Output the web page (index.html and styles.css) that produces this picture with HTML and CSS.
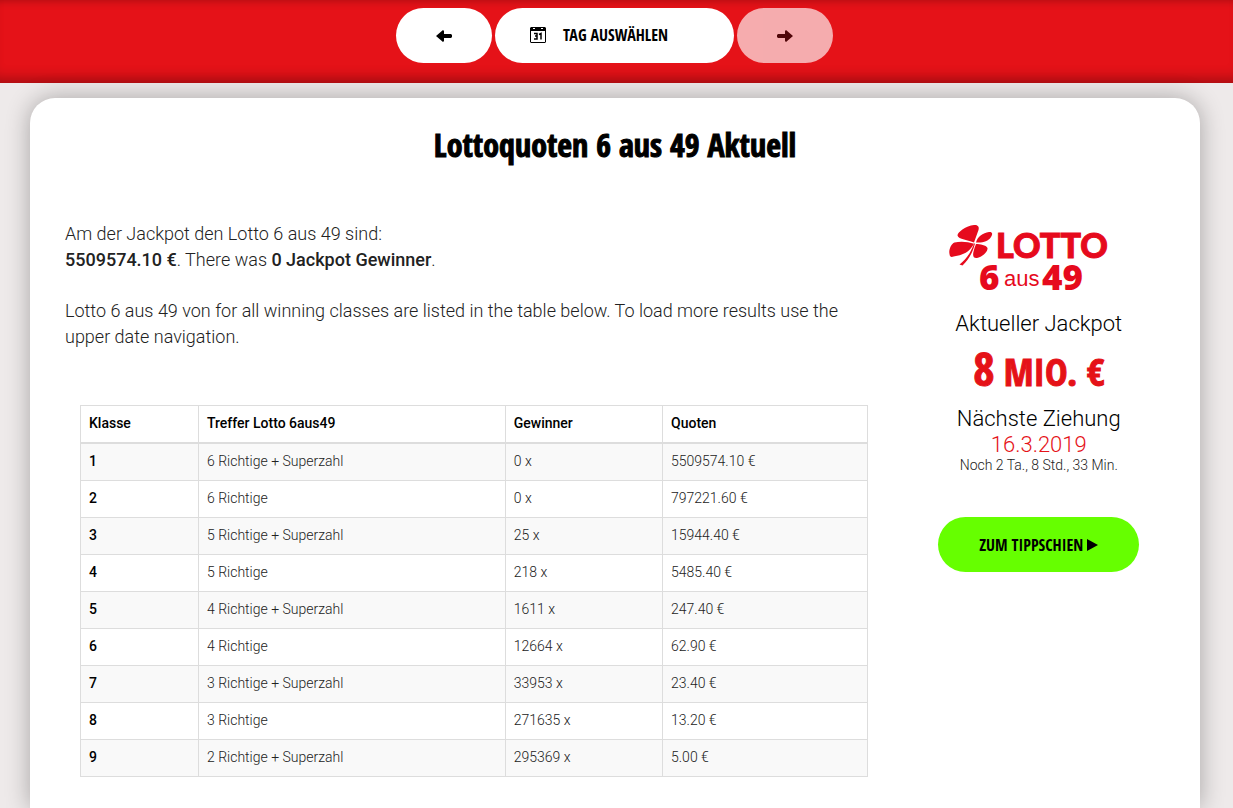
FILE: index.html
```html
<!DOCTYPE html>
<html lang="de">
<head>
	<meta charset="utf-8">
	<title>Lottoquoten 6 aus 49 Aktuell</title>
	<link rel="stylesheet" href="styles.css">
</head>
<body>
	<nav class="date-nav">
		<button class="btn btn-arrow" type="button" aria-label="Vorheriger Tag">
			<svg width="16" height="12" viewBox="0 0 16 12"><path d="M0 6 7 0 8 1V4H15L16 5V7L15 8H8V11L7 12Z"/></svg>
		</button>
		<button class="btn btn-date" type="button">
			<svg width="16" height="16" viewBox="0 0 16 16">
				<path fill-rule="evenodd" d="M1 0H15L16 1V15L15 16H1L0 15V1ZM1 4V15H15V4Z"/>
				<path fill="#fff" d="M3 1h2v1H3zM11 1h2v1h-2z"/>
				<path fill="none" stroke="#000" stroke-width="1.5" d="M4 6.500H7V12H4M5 9H7M9 7.500 11 6.500V12.500"/>
			</svg>
			<span>TAG AUSWÄHLEN</span>
		</button>
		<button class="btn btn-arrow" type="button" aria-label="Nächster Tag" disabled>
			<svg width="16" height="12" viewBox="0 0 16 12"><path d="M16 6 9 0 8 1V4H1L0 5V7L1 8H8V11L9 12Z"/></svg>
		</button>
	</nav>

	<main class="card">
		<h1>Lottoquoten 6 aus 49 Aktuell</h1>
		<div class="row">
			<section class="results">
				<p>Am der Jackpot den Lotto 6 aus 49 sind:<br>
				<b>5509574.10 €</b>. There was <b>0 Jackpot Gewinner</b>.</p>
				<p>Lotto 6 aus 49 von for all winning classes are listed in the table below. To load more results use the upper date navigation.</p>

				<div class="table-wrap">
					<table>
						<colgroup><col class="c-class"><col class="c-hits"><col class="c-winners"><col class="c-odds"></colgroup>
						<thead>
							<tr><th>Klasse</th><th>Treffer Lotto 6aus49</th><th>Gewinner</th><th>Quoten</th></tr>
						</thead>
						<tbody>
							<tr><th>1</th><td>6 Richtige + Superzahl</td><td>0 x</td><td>5509574.10 €</td></tr>
							<tr><th>2</th><td>6 Richtige</td><td>0 x</td><td>797221.60 €</td></tr>
							<tr><th>3</th><td>5 Richtige + Superzahl</td><td>25 x</td><td>15944.40 €</td></tr>
							<tr><th>4</th><td>5 Richtige</td><td>218 x</td><td>5485.40 €</td></tr>
							<tr><th>5</th><td>4 Richtige + Superzahl</td><td>1611 x</td><td>247.40 €</td></tr>
							<tr><th>6</th><td>4 Richtige</td><td>12664 x</td><td>62.90 €</td></tr>
							<tr><th>7</th><td>3 Richtige + Superzahl</td><td>33953 x</td><td>23.40 €</td></tr>
							<tr><th>8</th><td>3 Richtige</td><td>271635 x</td><td>13.20 €</td></tr>
							<tr><th>9</th><td>2 Richtige + Superzahl</td><td>295369 x</td><td>5.00 €</td></tr>
						</tbody>
					</table>
				</div>
			</section>

			<aside class="jackpot">
				<svg class="logo" width="180" height="90" viewBox="9 0 180 90" role="img" aria-label="LOTTO 6 aus 49">
					<path d="M34 21.500C29 19 18 18.500 17.500 14.500C17.500 11 26 5 34 4C38 3.500 39.500 6 38.500 9Z"/>
					<path d="M36 21.500C37 16.500 43 11.500 49 11C52.500 10.500 53 13 51 16C48 20.500 43 22 36 21.500Z"/>
					<path d="M34 22.800C28 20.500 20 20 14.500 21.500C11 23 8.500 29 9.500 33C10 37 12 36 16 35C23 33.500 29 32 34 22.800Z"/>
					<path d="M36 23C40 23 46 24 47.500 27C48 31 41 36.500 37 37C32 37.500 32 33 36 23Z"/>
					<path d="M35 22.500C32.500 32 29 38 22.500 44.500L19.500 43.500C27 37.500 31 31 34 22.500Z"/>
					<text class="logo-name" x="56" y="37">LOTTO</text>
					<text class="logo-number" x="39" y="69">6</text>
					<text class="logo-small" x="64" y="65">aus</text>
					<text class="logo-number" x="102" y="69">49</text>
				</svg>
				<div class="label">Aktueller Jackpot</div>
				<div class="amount"><span>8</span> MIO. €</div>
				<div class="label">Nächste Ziehung</div>
				<div class="label next-date">16.3.2019</div>
				<div class="countdown">Noch 2 Ta., 8 Std., 33 Min.</div>
				<a class="btn btn-play" href="#">ZUM TIPPSCHIEN
					<svg width="11" height="12" viewBox="0 0 11 12"><path d="M0 0 11 6 0 12Z"/></svg>
				</a>
			</aside>
		</div>
	</main>
</body>
</html>
```
FILE: styles.css
```css
* {
	box-sizing: border-box;
}

body {
	display: flex;
	flex-direction: column;
	min-height: 100vh;
	margin: 0;
	background: #eeeaea;
	color: #222;
	font: 300 14px/20px Roboto, sans-serif;
}

.date-nav {
	display: flex;
	justify-content: center;
	gap: 3px;
	padding: 8px 4px 20px 0;
	background: #e51218;
	box-shadow: inset 0 10px 10px -10px rgba(0, 0, 0, .3), inset 0 -14px 14px -10px rgba(0, 0, 0, .3);
}

.btn, h1, .amount {
	font-family: "Open Sans Condensed", "Open Sans", sans-serif;
	font-weight: 800;
	-webkit-text-stroke: 1px;
}

.btn {
	display: flex;
	align-items: center;
	justify-content: center;
	height: 55px;
	padding: 0 40px;
	border: 0;
	border-radius: 28px;
	background: #fff;
	color: #000;
	font-size: 16px;
	line-height: 20px;
	text-decoration: none;
	-webkit-text-stroke: 0;
}

.btn-date {
	width: 239px;
	gap: 17px;
	justify-content: flex-start;
	padding: 0 35px 2px;
}

.btn:disabled {
	opacity: .65;
}

.btn-play {
	gap: 4px;
	width: 201px;
	margin: 45px auto 0;
	padding: 0;
	background: #6f0;
}

.card {
	flex: 1;
	margin: 15px 33px 0 30px;
	padding: 27px 20px;
	border-radius: 25px 25px 0 0;
	background: #fff;
	box-shadow: 0 0 25px rgba(0, 0, 0, .3);
}

h1 {
	margin: 0 0 56px;
	color: #000;
	font-size: 32px;
	line-height: 40px;
	text-align: center;
}

.row {
	display: grid;
	grid-template-columns: 3fr 1fr;
}

.results {
	padding: 0 15px;
}

.results p {
	margin: 0 0 25px;
	font-size: 18px;
	line-height: 26px;
}

.results b {
	font-weight: 500;
}

.table-wrap {
	padding: 30px 15px 0;
}

table {
	width: 100%;
	table-layout: fixed;
	border-collapse: collapse;
}

th, td {
	height: 37px;
	padding: 7px 8px 9px;
	border: 1px solid #ddd;
	text-align: left;
}

th {
	color: #000;
	font-weight: 500;
}

thead th {
	border-bottom-width: 2px;
}

tbody tr:nth-child(odd) {
	background: #f9f9f9;
}

.c-class {
	width: 15%;
}

.c-hits {
	width: 39%;
}

.c-winners {
	width: 20%;
}

.jackpot {
	text-align: center;
}

.logo {
	display: block;
	margin: 0 auto;
	fill: #e60a1d;
}

.logo-name {
	font: 900 34px/1 Lato, sans-serif;
	stroke: #e60a1d;
}

.logo-number {
	font: 800 35px/1 "Open Sans", sans-serif;
}

.logo-small {
	font: 400 22px/1 "Liberation Sans", sans-serif;
}

.label {
	color: #000;
	font-size: 22px;
	line-height: 26px;
}

.amount {
	margin: 3px 0 7px;
	color: #e51218;
	font-size: 38px;
	line-height: 56px;
}

.amount span {
	font-size: 46px;
}

.next-date {
	color: #e51218;
}

.countdown {
	line-height: 14px;
}
```
